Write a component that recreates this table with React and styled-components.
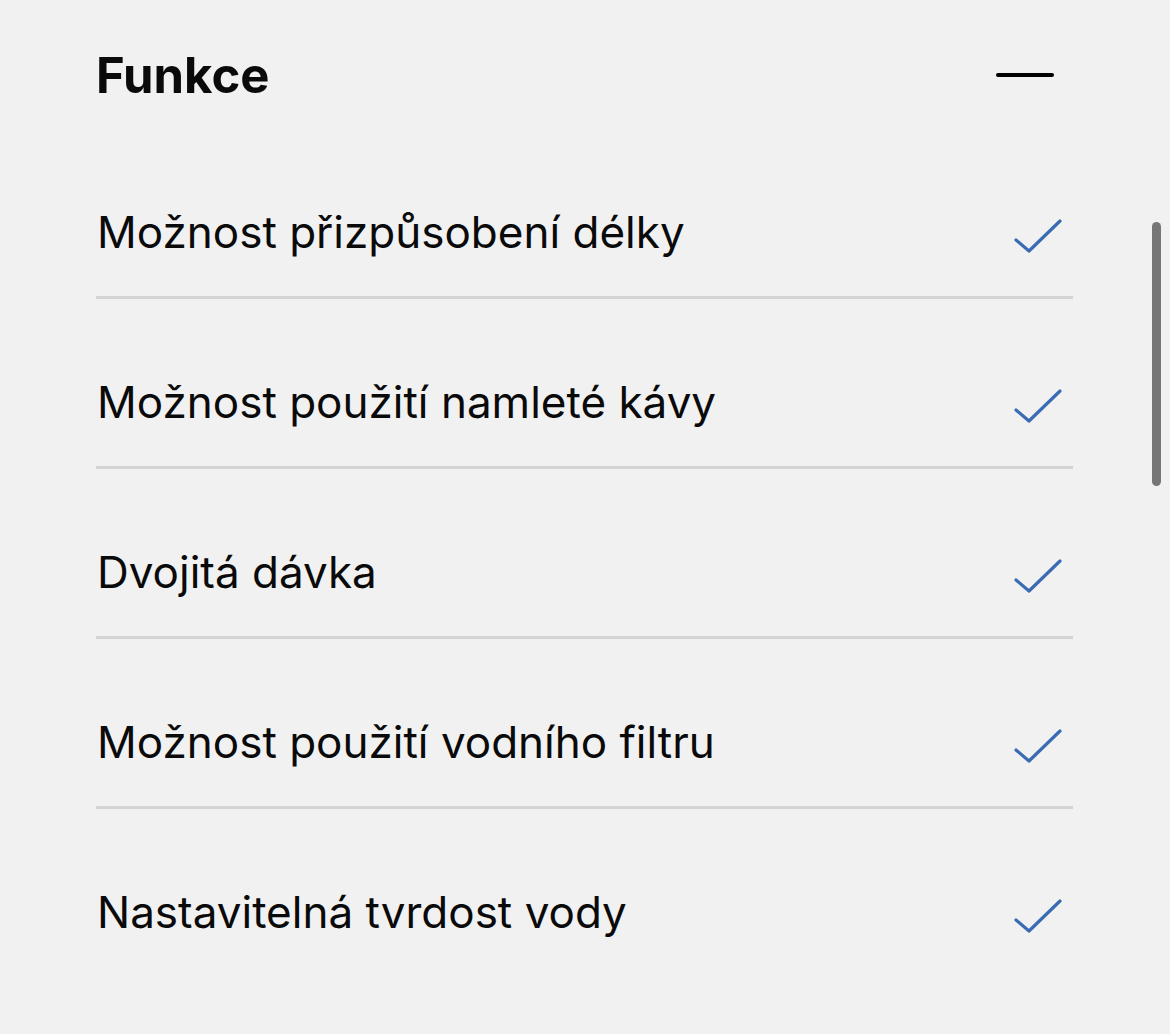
import React from 'react';
import styled, { createGlobalStyle } from 'styled-components';

const GlobalStyle = createGlobalStyle`
  html, body {
    margin: 0;
    padding: 0;
    background: #f1f1f1;
  }
  body {
    font-family: Inter, "Noto Sans", "Liberation Sans", sans-serif;
    color: #0a0a0a;
  }
`;

const Page = styled.div`
  position: relative;
  width: 1170px;
  height: 1034px;
  overflow: hidden;
  background: #f1f1f1;
`;

const Section = styled.section`
  padding: 0 97px 0 96px;
`;

const Header = styled.div`
  display: flex;
  align-items: center;
  justify-content: space-between;
  height: 129px;
  padding-top: 21px;
  box-sizing: border-box;
`;

const Title = styled.h2`
  margin: 0;
  font-size: 49px;
  font-weight: 700;
  line-height: 1;
`;

const Collapse = styled.span`
  display: block;
  width: 58px;
  height: 4px;
  border-radius: 2px;
  background: #000;
  margin-right: 19px;
`;

const List = styled.ul`
  list-style: none;
  margin: 0;
  padding: 0;
`;

const Row = styled.li`
  display: flex;
  align-items: center;
  justify-content: space-between;
  padding: 73px 11px 34px 1px;
  height: 60px;
  border-bottom: ${p => (p.last ? 'none' : '3px solid #d4d4d4')};
`;

const Label = styled.span`
  font-size: 44px;
  line-height: 60px;
  font-weight: 400;
`;

const Check = () => (
  <svg width="50" height="44" viewBox="0 0 50 44" fill="none">
    <path
      d="M4 30 L17 41 L48 11"
      stroke="#3a6cb4"
      strokeWidth="3.2"
      strokeLinecap="round"
      strokeLinejoin="round"
    />
  </svg>
);

const Scrollbar = styled.div`
  position: absolute;
  top: 222px;
  left: 1152px;
  width: 9px;
  height: 264px;
  border-radius: 5px;
  background: #767676;
`;

const features = [
  'Možnost přizpůsobení délky',
  'Možnost použití namleté kávy',
  'Dvojitá dávka',
  'Možnost použití vodního filtru',
  'Nastavitelná tvrdost vody',
];

export default function App() {
  return (
    <Page>
      <GlobalStyle />
      <Section>
        <Header>
          <Title>Funkce</Title>
          <Collapse />
        </Header>
        <List>
          {features.map((f, i) => (
            <Row key={f} last={i === features.length - 1}>
              <Label>{f}</Label>
              <Check />
            </Row>
          ))}
        </List>
      </Section>
      <Scrollbar />
    </Page>
  );
}
